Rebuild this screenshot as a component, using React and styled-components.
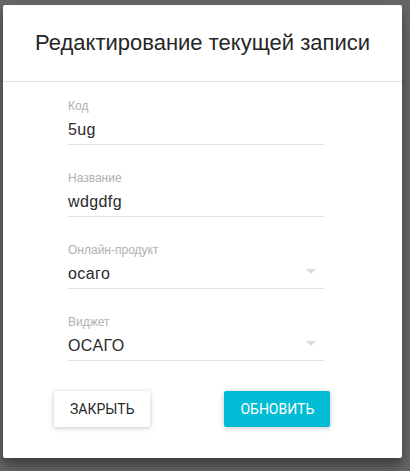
import styled, { createGlobalStyle } from "styled-components";

const Global = createGlobalStyle`
  html, body {
    margin: 0;
    padding: 0;
    background: #666666;
  }
  body {
    font-family: "Liberation Sans", Arial, sans-serif;
  }
`;

const fields = [
  { label: "Код", value: "5ug" },
  { label: "Название", value: "wdgdfg" },
  { label: "Онлайн-продукт", value: "осаго", select: true },
  { label: "Виджет", value: "ОСАГО", select: true },
];

export default function App() {
  return (
    <>
      <Global />
      <Backdrop>
        <Dialog>
          <Header>
            <Title>Редактирование текущей записи</Title>
          </Header>
          <Body>
            {fields.map((f) => (
              <Field key={f.label}>
                <Label>{f.label}</Label>
                <Value>
                  <span>{f.value}</span>
                  {f.select && <Arrow />}
                </Value>
              </Field>
            ))}
          </Body>
          <Actions>
            <Button>Закрыть</Button>
            <Button primary>Обновить</Button>
          </Actions>
        </Dialog>
      </Backdrop>
    </>
  );
}

const Backdrop = styled.div`
  width: 410px;
  height: 471px;
  padding: 5px 8px 13px 3px;
  box-sizing: border-box;
`;

const Dialog = styled.div`
  background: #fff;
  height: 100%;
  border-radius: 2px;
  box-shadow: 0 10px 20px rgba(0, 0, 0, 0.25), 0 6px 6px rgba(0, 0, 0, 0.2);
  display: flex;
  flex-direction: column;
`;

const Header = styled.div`
  height: 76px;
  display: flex;
  align-items: center;
  justify-content: center;
  border-bottom: 1px solid #e0e0e0;
`;

const Title = styled.h3`
  margin: 0;
  font-weight: 400;
  font-size: 22px;
  color: #262626;
`;

const Body = styled.div`
  display: flex;
  flex-direction: column;
  gap: 26px;
  padding: 17px 0 0 65px;
  width: 256px;
`;

const Field = styled.div`
  display: flex;
  flex-direction: column;
`;

const Label = styled.div`
  font-size: 12px;
  line-height: 14px;
  color: #b0b0b0;
`;

const Value = styled.div`
  height: 32px;
  display: flex;
  align-items: flex-end;
  justify-content: space-between;
  padding-bottom: 4px;
  box-sizing: border-box;
  border-bottom: 1px solid #e0e0e0;
  font-size: 16px;
  line-height: 20px;
  letter-spacing: 0.4px;
  color: #2a2a2a;
`;

const Arrow = styled.i`
  width: 0;
  height: 0;
  margin: 0 8px 10px 0;
  border-left: 5px solid transparent;
  border-right: 5px solid transparent;
  border-top: 5px solid #dcdcdc;
`;

const Actions = styled.div`
  display: flex;
  gap: 74px;
  padding: 30px 0 0 51px;
`;

const Button = styled.button`
  height: 36px;
  padding: 0 16px;
  border: none;
  border-radius: 2px;
  font-family: Roboto, "Liberation Sans", Arial, sans-serif;
  font-size: 14px;
  text-transform: uppercase;
  background: ${(p) => (p.primary ? "#00bcd4" : "#fff")};
  color: ${(p) => (p.primary ? "#fff" : "#2a2a2a")};
  box-shadow: 0 1px 6px rgba(0, 0, 0, 0.12), 0 1px 4px rgba(0, 0, 0, 0.12);
  cursor: pointer;
`;
